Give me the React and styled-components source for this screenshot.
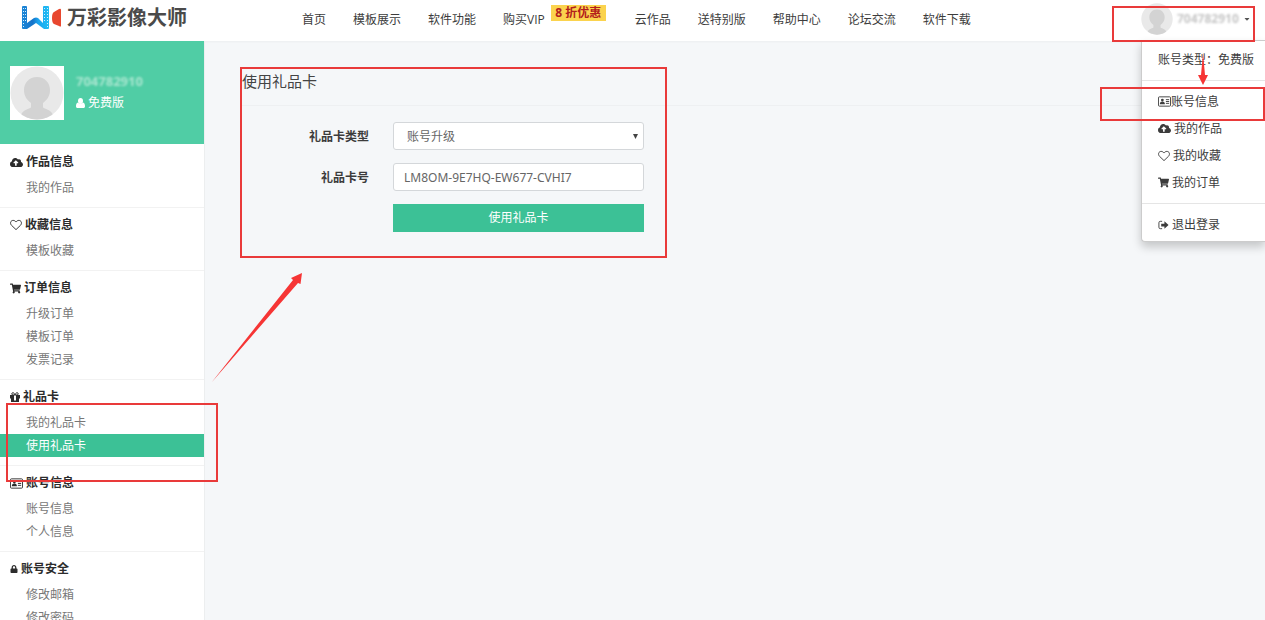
import React from "react";
import styled, { createGlobalStyle, css } from "styled-components";
import { FaCloudUploadAlt, FaShoppingCart, FaLock, FaCaretDown } from "react-icons/fa";

const GlobalStyle = createGlobalStyle`
  * { box-sizing: border-box; }
  body {
    margin: 0;
    overflow: hidden;
    background: #f5f7f9;
    color: #3c3c3c;
    font: 12px/20px "Open Sans", "Noto Sans CJK SC", sans-serif;
  }
  button, input, select { font: inherit; }
  a { color: inherit; text-decoration: none; }
  ul { list-style: none; margin: 0; padding: 0; }
`;

const green = "#3cc196";
const red = "#e93a3a";

const Page = styled.div`
  position: relative;
  display: flex;
  flex-direction: column;
  height: 100vh;
  overflow: hidden;
`;

const Header = styled.header`
  display: flex;
  align-items: center;
  flex: none;
  height: 41px;
  padding-bottom: 1px;
  background: #fff;
  box-shadow: 0 1px 2px rgba(0, 0, 0, 0.04);
`;

const Brand = styled.a`
  display: flex;
  align-items: center;
  gap: 6px;
  flex: none;
  width: 302px;
  height: 35px;
  align-self: flex-start;
  padding-left: 21px;
  color: #4a4a4a;
  font-size: 20px;
  font-weight: 700;
`;

const Nav = styled.nav`
  display: flex;
  flex: 1;
  gap: 27px;
  white-space: nowrap;
`;

const NavLink = styled.a`
  position: relative;
  padding-right: ${(p) => (p.$badge ? "63px" : "0")};
`;

const Badge = styled.span`
  position: absolute;
  top: -5px;
  right: 2px;
  width: 55px;
  background: #fbd34e;
  color: #b3201c;
  font-weight: 700;
  line-height: 16px;
  text-align: center;
`;

const Account = styled.div`
  position: relative;
  width: 124px;
  height: 40px;
`;

const AccountButton = styled.button`
  display: flex;
  align-items: center;
  gap: 4px;
  width: 100%;
  height: 38px;
  padding: 0;
  border: 0;
  background: none;
  color: #555;
`;

const Obscured = styled.span`
  filter: blur(1px);
  color: ${(p) => (p.$light ? "#a9e6d0" : "#c6c6c6")};
  font-size: ${(p) => (p.$light ? "13px" : "12px")};
  line-height: 16px;
  font-weight: 700;
`;

const Menu = styled.ul`
  position: absolute;
  top: 40px;
  right: 0;
  width: 124px;
  padding: 9px 0 3px;
  background: #fff;
  border: 1px solid #ccc;
  border-width: 1px 0 1px 1px;
  border-radius: 0 0 0 4px;
  box-shadow: 0 5px 10px rgba(0, 0, 0, 0.2);
  z-index: 2;
`;

const MenuItem = styled.li`
  padding-left: 16px;
  line-height: ${(p) => (p.$plain ? "20px" : "27px")};
  white-space: nowrap;
`;

const MenuLink = styled.a`
  display: flex;
  align-items: center;
  gap: ${(p) => (p.$tight ? "0" : "3px")};
`;

const Divider = styled.li`
  height: 1px;
  margin: ${(p) => (p.$low ? "7px 0" : "10px 0 7px")};
  background: #e5e5e5;
`;

const Body = styled.div`
  display: flex;
  flex: 1;
  min-height: 0;
`;

const Sidebar = styled.aside`
  flex: none;
  width: 205px;
  overflow: hidden;
  background: #fff;
  border-right: 1px solid #eceeef;
`;

const Profile = styled.section`
  display: flex;
  align-items: center;
  gap: 12px;
  height: 103px;
  margin-bottom: 1px;
  padding-left: 10px;
  background: #50cda5;
  color: #fff;
`;

const AvatarFrame = styled.div`
  display: flex;
  background: #fff;
`;

const ProfileText = styled.div`
  display: flex;
  flex-direction: column;
  gap: 4px;
`;

const Level = styled.div`
  display: flex;
  align-items: center;
  gap: 3px;
`;

const Group = styled.section`
  padding: 7px 0 8px;
  border-bottom: 1px solid #f2f2f2;
`;

const GroupTitle = styled.h2`
  display: flex;
  align-items: center;
  gap: 3px;
  margin: 0 0 4px;
  padding-left: 10px;
  color: #2c2c2c;
  font-size: 12px;
  line-height: 20px;
`;

const SideLink = styled.a`
  display: block;
  padding-left: 26px;
  color: #777;
  line-height: 23px;
  ${(p) => p.$active && css`
    background: ${green};
    color: #fff;
  `}
`;

const Main = styled.main`
  flex: 1;
  min-width: 0;
  padding: 26px 0 0 37px;
`;

const Title = styled.h1`
  margin: 0;
  padding-bottom: 10px;
  color: #444;
  font-size: 15px;
  font-weight: 400;
  line-height: 28px;
  border-bottom: 1px solid #eef0f2;
`;

const Form = styled.form`
  display: grid;
  grid-template-columns: 127px 251px;
  column-gap: 24px;
  row-gap: 13px;
  align-items: center;
  padding-top: 16px;
`;

const Label = styled.label`
  padding-top: 2px;
  text-align: right;
  font-weight: 700;
`;

const control = css`
  display: block;
  width: 100%;
  height: 28px;
  border: 1px solid #d4d7da;
  border-radius: 3px;
  background: #fff;
  color: #666;
`;

const SelectWrap = styled.div`
  position: relative;
`;

const Select = styled.select`
  ${control}
  appearance: none;
  padding: 2px 13px 0;
`;

const SelectArrow = styled.svg`
  position: absolute;
  top: 12px;
  right: 6px;
  pointer-events: none;
`;

const Input = styled.input`
  ${control}
  padding: 0 10px;
  font-family: "Noto Sans", "Noto Sans CJK SC", sans-serif;
`;

const Submit = styled.button`
  grid-column: 2;
  height: 28px;
  padding: 0;
  border: 0;
  background: ${green};
  color: #fff;
`;

const Highlight = styled.div`
  position: absolute;
  z-index: 3;
  top: ${(p) => p.$top}px;
  ${(p) => (p.$right === undefined ? `left: ${p.$left}px;` : `right: ${p.$right}px;`)}
  width: ${(p) => p.$width}px;
  height: ${(p) => p.$height}px;
  border: 2px solid ${red};
  pointer-events: none;
`;

const Arrow = styled.svg`
  position: absolute;
  z-index: 3;
  top: ${(p) => p.$top}px;
  ${(p) => (p.$right === undefined ? `left: ${p.$left}px;` : `right: ${p.$right}px;`)}
  fill: #f63535;
  pointer-events: none;
`;

const Avatar = ({ size }) => (
  <svg width={size} height={size} viewBox="0 0 54 54" aria-hidden="true">
    <clipPath id={`avatar${size}`}><circle cx="27" cy="27" r="26.5" /></clipPath>
    <g clipPath={`url(#avatar${size})`}>
      <rect width="54" height="54" fill="#e9e9e9" />
      <path fill="#d3d3d3" d="M27 11c-8 0-13 6-13 13 0 6 3 10 7 13v4c0 2-8 2-10 8v6h32v-6c-2-6-10-6-10-8v-4c4-3 7-7 7-13 0-7-5-13-13-13z" />
    </g>
  </svg>
);

const HeartIcon = () => (
  <svg width="12" height="12" viewBox="0 0 13 12" fill="none" stroke="currentColor" strokeLinejoin="round" aria-hidden="true">
    <path d="M6.5 11 1.6 6.3C-.4 4 .8 1 3.4 1c1.5 0 2.4.9 3.1 1.800C7.200 1.900 8.100 1 9.600 1c2.600 0 3.800 3 1.800 5.300z" />
  </svg>
);

const UserIcon = () => (
  <svg width="9" height="10" viewBox="0 0 9 10" fill="currentColor" aria-hidden="true">
    <ellipse cx="4.500" cy="3" rx="2.500" ry="3" />
    <path d="M2 4.500C.5 4.700 0 6.500 0 8.200 0 9.300.6 10 1.600 10h5.800C8.400 10 9 9.300 9 8.200 9 6.500 8.500 4.700 7 4.500 6.300 6 2.700 6 2 4.500z" />
  </svg>
);

const GiftIcon = () => (
  <svg width="10" height="10" viewBox="0 0 10 10" aria-hidden="true">
    <path d="M5 3C4.500 1.500 3.800.7 2.900.7c-1.500 0-1.500 2.300 0 2.300H7.100c1.500 0 1.500-2.300 0-2.300C6.200.7 5.500 1.500 5 3z" fill="none" stroke="currentColor" />
    <path d="M0 3h4v7H1V6.500H0zM6 3h4v3.500H9V10H6z" fill="currentColor" />
    <path d="M4 8.500h2V10H4z" fill="currentColor" />
  </svg>
);

const CardIcon = () => (
  <svg width="13" height="11" viewBox="0 0 14 11" aria-hidden="true">
    <rect x=".5" y=".5" width="13" height="10" rx="1" fill="none" stroke="currentColor" />
    <circle cx="4.700" cy="4" r="1.500" fill="currentColor" />
    <path d="M2 8.500c0-2 .8-3 2.700-3s2.700 1 2.700 3z" fill="currentColor" />
    <path d="M8.500 3.500H12M8.500 5.500H12M8.500 7.500H12" stroke="currentColor" />
  </svg>
);

const LogoutIcon = () => (
  <svg width="11" height="10" viewBox="0 0 12 10" aria-hidden="true">
    <path d="M4.500 1H2.500Q1 1 1 2.500v5Q1 9 2.500 9h2" fill="none" stroke="currentColor" />
    <path d="M7 1l4.500 4L7 9V6.500H3.500v-3H7z" fill="currentColor" />
  </svg>
);

const Logo = () => (
  <svg width="40" height="26" viewBox="0 0 40 26" aria-hidden="true">
    <defs>
      <linearGradient id="film" x1="0" x2="1">
        <stop offset="0" stopColor="#1a86d8" />
        <stop offset=".4" stopColor="#1673c9" />
        <stop offset=".6" stopColor="#1ba5ee" />
        <stop offset="1" stopColor="#20bdf4" />
      </linearGradient>
    </defs>
    <path fill="url(#film)" d="M1 2q0-1 1-1h3q1 0 1 1v16l7-5q2-1 4 0l5 5V2q0-1 1-1h4q1 0 1 1v21q0 1-1 1h-4l-8-6-9 6H2q-1 0-1-1z" />
    <path stroke="#d5effc" strokeDasharray="1 2" d="M2.500 3v19M4.500 3v15M23.500 3v15M26.500 3v19" />
    <path fill="#e8472f" d="M40 5v16q0 1-2 0l-5-2q-2-1-2-6t2-6l5-3q2-1 2 1z" />
  </svg>
);

const groups = [
  { title: "作品信息", icon: <FaCloudUploadAlt size={13} />, links: ["我的作品"] },
  { title: "收藏信息", icon: <HeartIcon />, links: ["模板收藏"] },
  { title: "订单信息", icon: <FaShoppingCart size={11} />, links: ["升级订单", "模板订单", "发票记录"] },
  { title: "礼品卡", icon: <GiftIcon />, links: ["我的礼品卡", "使用礼品卡"] },
  { title: "账号信息", icon: <CardIcon />, links: ["账号信息", "个人信息"] },
  { title: "账号安全", icon: <FaLock size={8} />, links: ["修改邮箱", "修改密码"] },
];

const navItems = ["首页", "模板展示", "软件功能", "购买VIP", "云作品", "送特别版", "帮助中心", "论坛交流", "软件下载"];

export default function App() {
  return (
    <Page>
      <GlobalStyle />
      <Header>
        <Brand href="#"><Logo />万彩影像大师</Brand>
        <Nav>
          {navItems.map((item) => (
            <NavLink key={item} href="#" $badge={item === "购买VIP"}>
              {item}
              {item === "购买VIP" && <Badge>8 折优惠</Badge>}
            </NavLink>
          ))}
        </Nav>
        <Account>
          <AccountButton type="button">
            <Avatar size={32} />
            <Obscured>704782910</Obscured>
            <FaCaretDown size={8} />
          </AccountButton>
          <Menu>
            <MenuItem $plain>账号类型：免费版</MenuItem>
            <Divider />
            <MenuItem><MenuLink href="#" $tight><CardIcon />账号信息</MenuLink></MenuItem>
            <MenuItem><MenuLink href="#"><FaCloudUploadAlt size={13} />我的作品</MenuLink></MenuItem>
            <MenuItem><MenuLink href="#"><HeartIcon />我的收藏</MenuLink></MenuItem>
            <MenuItem><MenuLink href="#"><FaShoppingCart size={11} />我的订单</MenuLink></MenuItem>
            <Divider $low />
            <MenuItem><MenuLink href="#"><LogoutIcon />退出登录</MenuLink></MenuItem>
          </Menu>
        </Account>
      </Header>
      <Body>
        <Sidebar>
          <Profile>
            <AvatarFrame><Avatar size={54} /></AvatarFrame>
            <ProfileText>
              <Obscured $light>704782910</Obscured>
              <Level><UserIcon />免费版</Level>
            </ProfileText>
          </Profile>
          {groups.map((group) => (
            <Group key={group.title}>
              <GroupTitle>{group.icon}{group.title}</GroupTitle>
              {group.links.map((link) => (
                <SideLink key={link} href="#" $active={link === "使用礼品卡"}>{link}</SideLink>
              ))}
            </Group>
          ))}
        </Sidebar>
        <Main>
          <Title>使用礼品卡</Title>
          <Form>
            <Label htmlFor="card-type">礼品卡类型</Label>
            <SelectWrap>
              <Select id="card-type"><option>账号升级</option></Select>
              <SelectArrow width="5" height="5" viewBox="0 0 5 5"><path d="M0 0h5L2.500 5z" fill="#444" /></SelectArrow>
            </SelectWrap>
            <Label htmlFor="card-number">礼品卡号</Label>
            <Input id="card-number" defaultValue="LM8OM-9E7HQ-EW677-CVHI7" />
            <Submit type="button">使用礼品卡</Submit>
          </Form>
        </Main>
      </Body>
      <Highlight $left={240} $top={67} $width={427} $height={191} />
      <Highlight $left={6} $top={403} $width={212} $height={79} />
      <Highlight $right={10} $top={6} $width={143} $height={36} />
      <Highlight $right={0} $top={87} $width={165} $height={34} />
      <Arrow $left={211} $top={272} width="92" height="112" viewBox="0 0 92 112">
        <path d="M91 1 80 6l2 2L.5 110.500 87 11l2.500 1z" />
      </Arrow>
      <Arrow $right={56} $top={53} width="12" height="33" viewBox="0 0 12 33">
        <path d="M6 0 4 22H1l5 10 5-10H8z" />
      </Arrow>
    </Page>
  );
}
